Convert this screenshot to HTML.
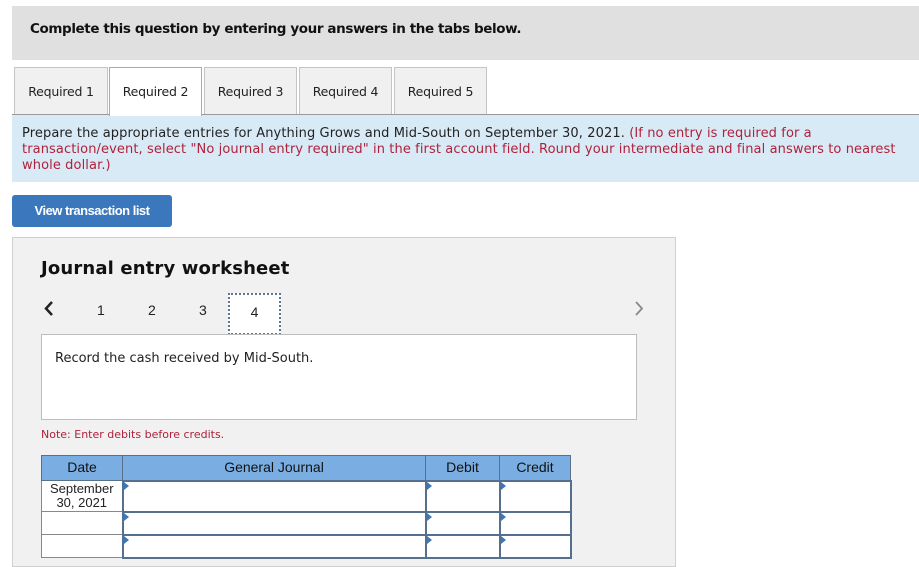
<!DOCTYPE html>
<html><head><meta charset="utf-8"><style>
*{margin:0;padding:0;box-sizing:border-box}
body{width:919px;height:558px;overflow:hidden;background:#fff;font-family:"DejaVu Sans","Liberation Sans",sans-serif;position:relative;color:#222}
.a{position:absolute}
.hdr{left:12px;top:6px;width:907px;height:54px;background:#e0e0e0}
.hdr span{position:absolute;left:18px;top:15px;font-size:13.5px;font-weight:bold;color:#111;letter-spacing:-0.4px}
.tab{top:67px;height:48px;background:#f0f0f0;border:1px solid #c4c4c4;border-bottom:none;font-size:12.5px;text-align:center;line-height:48px;color:#222;letter-spacing:-0.2px}
.line{left:12px;top:114px;width:907px;height:1px;background:#999}
.info{left:12px;top:115px;width:907px;height:67px;background:#d9eaf7;font-size:13px;line-height:16px;padding:11px 20px 0 10px;letter-spacing:0.1px}
.red{color:#b0213a}
.btn{left:12px;top:195px;width:160px;height:32px;background:#3a77bd;border-radius:3px;color:#fff;font-family:"Liberation Sans",sans-serif;font-weight:bold;font-size:13px;line-height:32px;text-align:center;letter-spacing:-0.5px}
.panel{left:12px;top:237px;width:664px;height:330px;background:#f1f1f1;border:1px solid #cfcfcf}
.title{left:41px;top:258px;font-size:18px;font-weight:bold;color:#111;letter-spacing:0.15px}
.num{top:302px;font-family:"Liberation Sans",sans-serif;font-size:14px;color:#222}
.box4{left:228px;top:293px;width:53px;height:42px;background:#fff;border:2px dotted #5b7590;text-align:center;line-height:34px;font-family:"Liberation Sans",sans-serif;font-size:14px}
.tb{left:41px;top:334px;width:596px;height:86px;background:#fff;border:1px solid #bdbdbd;font-size:13px;padding:16px 0 0 13px}
.note{left:41px;top:428px;font-size:11px;color:#b0213a}
table{position:absolute;left:41px;top:455px;border-collapse:collapse;font-family:"Liberation Sans",sans-serif;font-size:14px}
th{background:#7aaee3;font-weight:normal;height:25px;border:1px solid #5a6f8a;color:#111;padding-bottom:2px}
td{background:#fff;border:1px solid #888;position:relative}
td.i{border:2px solid #55708f}
td.i:before{content:"";position:absolute;left:0;top:0;border-left:5px solid #3a77bd;border-top:4px solid transparent;border-bottom:4px solid transparent}
</style></head><body>
<div class="a hdr"><span>Complete this question by entering your answers in the tabs below.</span></div>
<div class="a tab" style="left:14px;width:94px">Required 1</div>
<div class="a tab" style="left:109px;width:93px;background:#fff;border-color:#aaa;height:49px;z-index:2">Required 2</div>
<div class="a tab" style="left:204px;width:93px">Required 3</div>
<div class="a tab" style="left:299px;width:93px">Required 4</div>
<div class="a tab" style="left:394px;width:93px">Required 5</div>
<div class="a line"></div>
<div class="a info">Prepare the appropriate entries for Anything Grows and Mid-South on September 30, 2021. <span class="red">(If no entry is required for a transaction/event, select "No journal entry required" in the first account field. Round your intermediate and final answers to nearest whole dollar.)</span></div>
<div class="a btn">View transaction list</div>
<div class="a panel"></div>
<div class="a title">Journal entry worksheet</div>
<svg class="a" style="left:43px;top:300px" width="12" height="17"><path d="M9 2 L3 8.5 L9 15" stroke="#222" stroke-width="2.5" fill="none"/></svg>
<svg class="a" style="left:633px;top:300px" width="12" height="17"><path d="M3 2 L9 8.5 L3 15" stroke="#888" stroke-width="1.8" fill="none"/></svg>
<div class="a num" style="left:97px">1</div>
<div class="a num" style="left:148px">2</div>
<div class="a num" style="left:199px">3</div>
<div class="a box4">4</div>
<div class="a tb">Record the cash received by Mid-South.</div>
<div class="a note">Note: Enter debits before credits.</div>
<table>
<tr><th style="width:81px">Date</th><th style="width:303px">General Journal</th><th style="width:74px">Debit</th><th style="width:71px">Credit</th></tr>
<tr style="height:31px"><td style="text-align:center;line-height:14px;font-size:13px">September<br>30, 2021</td><td class="i"></td><td class="i"></td><td class="i"></td></tr>
<tr style="height:23px"><td></td><td class="i"></td><td class="i"></td><td class="i"></td></tr>
<tr style="height:23px"><td></td><td class="i"></td><td class="i"></td><td class="i"></td></tr>
</table>
</body></html>
